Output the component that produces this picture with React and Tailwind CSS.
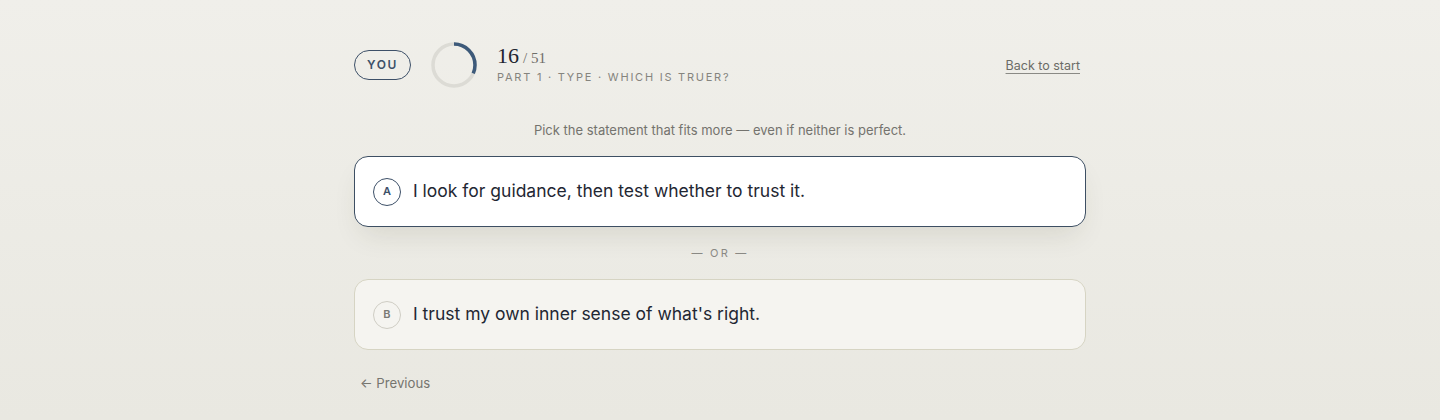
import React from "react";

function Ring() {
  const r = 21;
  const c = 2 * Math.PI * r;
  const p = 16 / 51;
  return (
    <svg width="48" height="48" viewBox="0 0 48 48" className="shrink-0">
      <circle cx="24" cy="24" r={r} fill="none" stroke="#dcdbd5" strokeWidth="3.5" />
      <circle
        cx="24"
        cy="24"
        r={r}
        fill="none"
        stroke="#3d5a7a"
        strokeWidth="3.5"
        strokeDasharray={`${c * p} ${c}`}
        transform="rotate(-90 24 24)"
      />
    </svg>
  );
}

export default function App() {
  return (
    <div
      className="min-h-[420px] w-full bg-gradient-to-b from-[#f0efea] to-[#e9e8e1] text-[#1f2a37]"
      style={{ fontFamily: "Inter, 'Noto Sans', sans-serif" }}
    >
      <div className="mx-auto w-[732px] pt-[41px]">
        {/* header */}
        <div className="flex items-center">
          <div className="flex h-[30px] w-[57px] items-center justify-center rounded-full border border-[#3d5068] text-[12px] font-semibold tracking-[0.14em] text-[#3d5068]">
            YOU
          </div>
          <div className="ml-[19px]">
            <Ring />
          </div>
          <div className="mb-[3px] ml-[19px] flex flex-col">
            <div className="flex items-baseline leading-none" style={{ fontFamily: "'Liberation Serif', 'DejaVu Serif', serif" }}>
              <span className="text-[22px] text-[#1f2530]">16</span>
              <span className="ml-[4px] text-[15px] text-[#6f6f6a]">/ 51</span>
            </div>
            <div className="mt-[5px] text-[11px] leading-none tracking-[0.16em] text-[#85847e]">
              PART 1 · TYPE · WHICH IS TRUER?
            </div>
          </div>
          <a className="ml-auto mr-[6px] mt-[3px] text-[12.5px] text-[#6b6b66] underline underline-offset-[3px] decoration-[#8a8a85]">
            Back to start
          </a>
        </div>

        {/* instruction */}
        <p className="mt-[31px] text-center text-[13px] leading-5 text-[#74736e]">
          Pick the statement that fits more — even if neither is perfect.
        </p>

        {/* option A */}
        <button className="mt-[16px] flex h-[71px] w-full items-center rounded-[14px] border border-[#3d4f63] bg-white pl-[18px] text-left shadow-[0_14px_28px_-8px_rgba(60,60,30,0.13)]">
          <span className="flex h-[28px] w-[28px] shrink-0 items-center justify-center rounded-full border border-[#3d5068] text-[11px] font-semibold text-[#3d5068]">
            A
          </span>
          <span className="ml-[12px] text-[17.5px] text-[#1f2733]">
            I look for guidance, then test whether to trust it.
          </span>
        </button>

        <div className="mt-[18px] text-center text-[11px] leading-4 tracking-[0.2em] text-[#8a8984]">
          — OR —
        </div>

        {/* option B */}
        <button className="mt-[18px] flex h-[71px] w-full items-center rounded-[14px] border border-[#d6d4c3] bg-[#f5f4f0] pl-[18px] text-left">
          <span className="flex h-[28px] w-[28px] shrink-0 items-center justify-center rounded-full border border-[#cfcdc4] text-[11px] font-semibold text-[#7a7a75]">
            B
          </span>
          <span className="ml-[12px] text-[17.5px] text-[#1f2733]">
            I trust my own inner sense of what's right.
          </span>
        </button>

        <button className="mt-[23px] pl-[6px] text-[13.2px] leading-5 text-[#76756f]">
          ← Previous
        </button>
      </div>
    </div>
  );
}
